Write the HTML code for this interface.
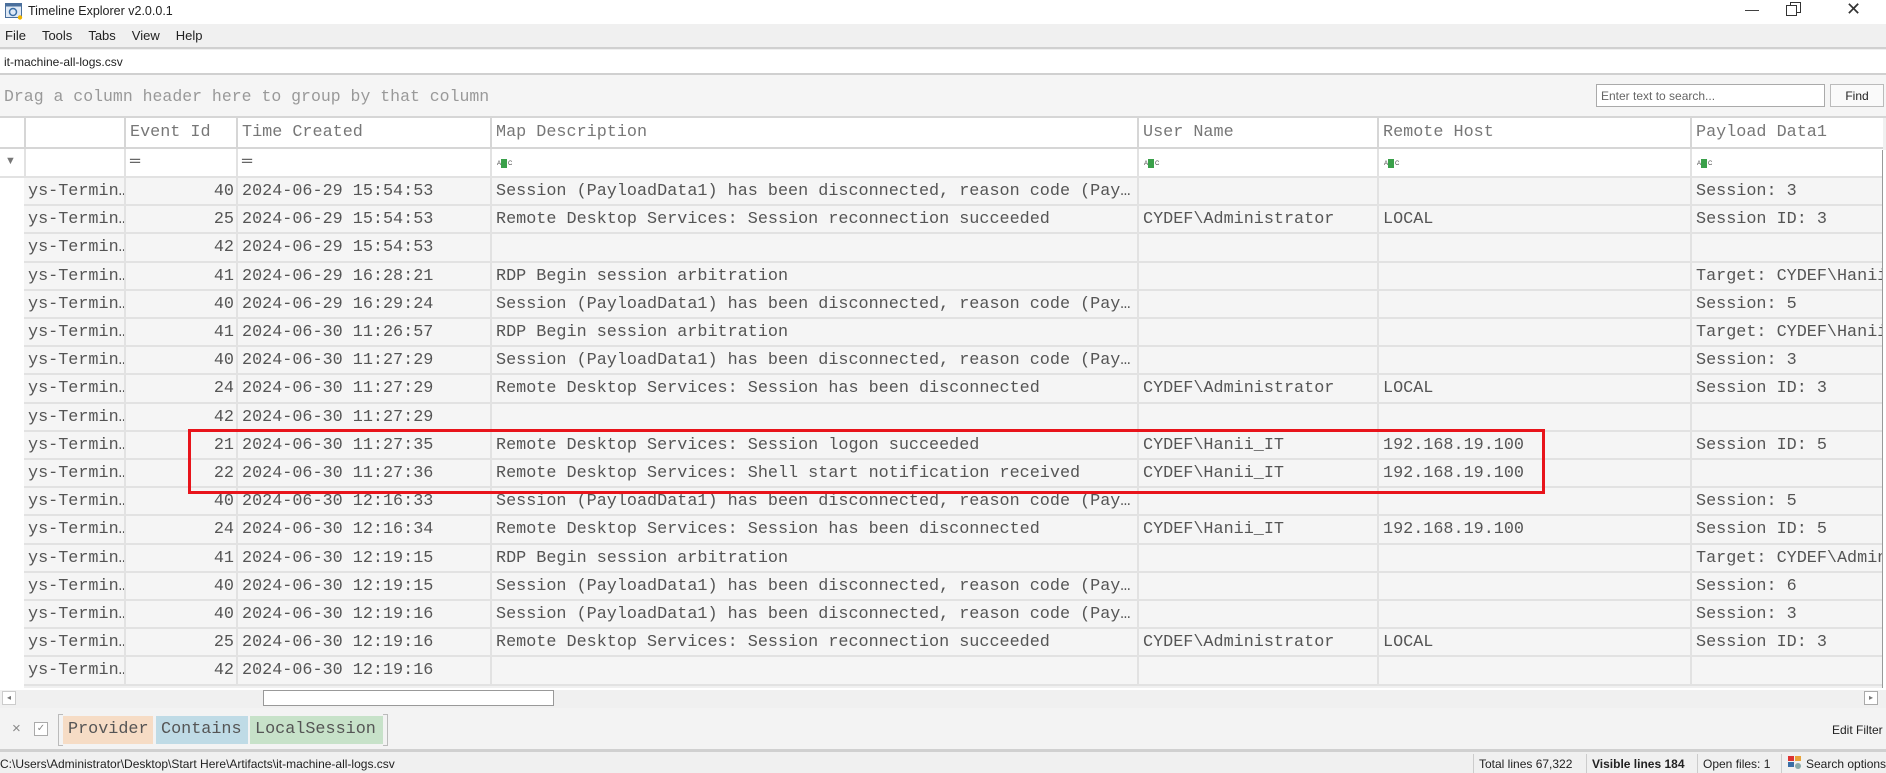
<!DOCTYPE html>
<html><head><meta charset="utf-8"><style>
*{box-sizing:border-box;margin:0;padding:0}
body{width:1886px;height:773px;overflow:hidden;background:#f0f0f0;font-family:"Liberation Sans",sans-serif;position:relative;color:#222}
.abs{position:absolute}
.mono{font-family:"Liberation Mono",monospace}
.row{position:absolute;left:24px;width:1859px;height:28.2px;border-bottom:2px solid #e2e2e2;background:#f5f5f5}
.c{position:absolute;top:0;height:100%;border-left:2px solid #e2e2e2;font-family:"Liberation Mono",monospace;font-size:16.8px;color:#555;line-height:27px;padding-left:4px;white-space:nowrap;overflow:hidden}
.hd{position:absolute;top:0;height:100%;border-left:2px solid #d6d6d6;font-family:"Liberation Mono",monospace;font-size:16.8px;color:#777;line-height:30px;padding-left:4px;white-space:nowrap;overflow:hidden}
.abc{position:absolute;left:5px;top:10px;width:14px;height:9px}
.abc i{position:absolute;top:2px;font-style:normal;font-size:6px;line-height:6px;color:#444;font-family:"Liberation Sans",sans-serif}
.abc b{position:absolute;left:4px;top:0;width:6px;height:9px;background:#3aa04a}
</style></head><body>
<div class="abs" style="left:0;top:0;width:1886px;height:24px;background:#fff"></div>
<svg class="abs" style="left:5px;top:3px" width="18" height="17" viewBox="0 0 18 17"><rect x="0.5" y="0.5" width="16" height="14" fill="#dfe9f5" stroke="#4a6f9c"/><rect x="0.5" y="0.5" width="16" height="3" fill="#4a6f9c"/><circle cx="8" cy="9" r="3.5" fill="none" stroke="#3a6ea5" stroke-width="1.5"/><circle cx="15" cy="14.5" r="2.2" fill="#f0b400"/></svg>
<div class="abs" style="left:28px;top:4px;font-size:12.5px;color:#222">Timeline Explorer v2.0.0.1</div>
<div class="abs" style="left:1745px;top:1px;font-size:14px;color:#333">—</div>
<div class="abs" style="left:1790px;top:2px;width:11px;height:11px;border:1px solid #333;background:#fff"></div>
<div class="abs" style="left:1786px;top:5px;width:11px;height:11px;border:1px solid #333;background:#fff"></div>
<div class="abs" style="left:1846px;top:-1px;font-size:18px;color:#333">✕</div>
<div class="abs" style="left:0;top:24px;width:1886px;height:25px;background:#f0f0f0;border-bottom:2px solid #d0d0d0"></div>
<div class="abs" style="left:5px;top:28px;font-size:13px;color:#222"><span>File</span><span style="margin-left:16px">Tools</span><span style="margin-left:16px">Tabs</span><span style="margin-left:16px">View</span><span style="margin-left:16px">Help</span></div>
<div class="abs" style="left:0;top:50px;width:1886px;height:25px;background:#fff;border-bottom:2px solid #d0d0d0"></div>
<div class="abs" style="left:4px;top:55px;font-size:12px;color:#222">it-machine-all-logs.csv</div>
<div class="abs" style="left:0;top:75px;width:1886px;height:43px;background:#f5f5f5;border-bottom:2px solid #d6d6d6"></div>
<div class="abs mono" style="left:4px;top:87px;font-size:16.5px;color:#999">Drag a column header here to group by that column</div>
<div class="abs" style="left:1596px;top:84px;width:229px;height:23px;background:#fff;border:1px solid #aaa;font-size:12px;color:#666;padding:4px 4px">Enter text to search...</div>
<div class="abs" style="left:1830px;top:84px;width:54px;height:23px;background:#fafafa;border:1px solid #bbb;font-size:12px;color:#222;text-align:center;padding-top:4px">Find</div>
<div class="abs" style="left:0;top:118px;width:1883px;height:31px;background:#fff;border-bottom:2px solid #d6d6d6">
<div class="hd" style="left:24px;width:100px"></div>
<div class="hd" style="left:124px;width:112px">Event Id</div>
<div class="hd" style="left:236px;width:254px">Time Created</div>
<div class="hd" style="left:490px;width:647px">Map Description</div>
<div class="hd" style="left:1137px;width:241px">User Name</div>
<div class="hd" style="left:1377px;width:313px">Remote Host</div>
<div class="hd" style="left:1690px;width:193px">Payload Data1</div>
</div>
<div class="abs" style="left:0;top:149px;width:1883px;height:29px;background:#fff;border-bottom:2px solid #e2e2e2">
<div class="abs" style="left:5px;top:6px;font-size:11px;color:#777">▼</div>
<div class="c" style="left:24px;width:100px"></div>
<div class="c" style="left:124px;width:112px;color:#666">═</div>
<div class="c" style="left:236px;width:254px;color:#666">═</div>
<div class="c" style="left:490px;width:647px"><span class="abc"><i style="left:0">A</i><b></b><i style="left:11px">C</i></span></div>
<div class="c" style="left:1137px;width:241px"><span class="abc"><i style="left:0">A</i><b></b><i style="left:11px">C</i></span></div>
<div class="c" style="left:1377px;width:313px"><span class="abc"><i style="left:0">A</i><b></b><i style="left:11px">C</i></span></div>
<div class="c" style="left:1690px;width:193px"><span class="abc"><i style="left:0">A</i><b></b><i style="left:11px">C</i></span></div>
</div>
<div class="abs" style="left:0;top:178px;width:24px;height:510px;background:#fff"></div>
<div class="row" style="top:178px"><div class="c" style="left:0;width:100px;border-left:none">ys-Termin…</div><div class="c" style="left:100px;width:112px;text-align:right;padding-right:2px">40</div><div class="c" style="left:212px;width:254px">2024-06-29 15:54:53</div><div class="c" style="left:466px;width:647px">Session (PayloadData1) has been disconnected, reason code (Pay…</div><div class="c" style="left:1113px;width:241px"></div><div class="c" style="left:1353px;width:313px"></div><div class="c" style="left:1666px;width:193px">Session: 3</div></div>
<div class="row" style="top:206.2px"><div class="c" style="left:0;width:100px;border-left:none">ys-Termin…</div><div class="c" style="left:100px;width:112px;text-align:right;padding-right:2px">25</div><div class="c" style="left:212px;width:254px">2024-06-29 15:54:53</div><div class="c" style="left:466px;width:647px">Remote Desktop Services: Session reconnection succeeded</div><div class="c" style="left:1113px;width:241px">CYDEF\Administrator</div><div class="c" style="left:1353px;width:313px">LOCAL</div><div class="c" style="left:1666px;width:193px">Session ID: 3</div></div>
<div class="row" style="top:234.4px"><div class="c" style="left:0;width:100px;border-left:none">ys-Termin…</div><div class="c" style="left:100px;width:112px;text-align:right;padding-right:2px">42</div><div class="c" style="left:212px;width:254px">2024-06-29 15:54:53</div><div class="c" style="left:466px;width:647px"></div><div class="c" style="left:1113px;width:241px"></div><div class="c" style="left:1353px;width:313px"></div><div class="c" style="left:1666px;width:193px"></div></div>
<div class="row" style="top:262.6px"><div class="c" style="left:0;width:100px;border-left:none">ys-Termin…</div><div class="c" style="left:100px;width:112px;text-align:right;padding-right:2px">41</div><div class="c" style="left:212px;width:254px">2024-06-29 16:28:21</div><div class="c" style="left:466px;width:647px">RDP Begin session arbitration</div><div class="c" style="left:1113px;width:241px"></div><div class="c" style="left:1353px;width:313px"></div><div class="c" style="left:1666px;width:193px">Target: CYDEF\Hanii_IT</div></div>
<div class="row" style="top:290.8px"><div class="c" style="left:0;width:100px;border-left:none">ys-Termin…</div><div class="c" style="left:100px;width:112px;text-align:right;padding-right:2px">40</div><div class="c" style="left:212px;width:254px">2024-06-29 16:29:24</div><div class="c" style="left:466px;width:647px">Session (PayloadData1) has been disconnected, reason code (Pay…</div><div class="c" style="left:1113px;width:241px"></div><div class="c" style="left:1353px;width:313px"></div><div class="c" style="left:1666px;width:193px">Session: 5</div></div>
<div class="row" style="top:319px"><div class="c" style="left:0;width:100px;border-left:none">ys-Termin…</div><div class="c" style="left:100px;width:112px;text-align:right;padding-right:2px">41</div><div class="c" style="left:212px;width:254px">2024-06-30 11:26:57</div><div class="c" style="left:466px;width:647px">RDP Begin session arbitration</div><div class="c" style="left:1113px;width:241px"></div><div class="c" style="left:1353px;width:313px"></div><div class="c" style="left:1666px;width:193px">Target: CYDEF\Hanii_IT</div></div>
<div class="row" style="top:347.2px"><div class="c" style="left:0;width:100px;border-left:none">ys-Termin…</div><div class="c" style="left:100px;width:112px;text-align:right;padding-right:2px">40</div><div class="c" style="left:212px;width:254px">2024-06-30 11:27:29</div><div class="c" style="left:466px;width:647px">Session (PayloadData1) has been disconnected, reason code (Pay…</div><div class="c" style="left:1113px;width:241px"></div><div class="c" style="left:1353px;width:313px"></div><div class="c" style="left:1666px;width:193px">Session: 3</div></div>
<div class="row" style="top:375.4px"><div class="c" style="left:0;width:100px;border-left:none">ys-Termin…</div><div class="c" style="left:100px;width:112px;text-align:right;padding-right:2px">24</div><div class="c" style="left:212px;width:254px">2024-06-30 11:27:29</div><div class="c" style="left:466px;width:647px">Remote Desktop Services: Session has been disconnected</div><div class="c" style="left:1113px;width:241px">CYDEF\Administrator</div><div class="c" style="left:1353px;width:313px">LOCAL</div><div class="c" style="left:1666px;width:193px">Session ID: 3</div></div>
<div class="row" style="top:403.6px"><div class="c" style="left:0;width:100px;border-left:none">ys-Termin…</div><div class="c" style="left:100px;width:112px;text-align:right;padding-right:2px">42</div><div class="c" style="left:212px;width:254px">2024-06-30 11:27:29</div><div class="c" style="left:466px;width:647px"></div><div class="c" style="left:1113px;width:241px"></div><div class="c" style="left:1353px;width:313px"></div><div class="c" style="left:1666px;width:193px"></div></div>
<div class="row" style="top:431.8px"><div class="c" style="left:0;width:100px;border-left:none">ys-Termin…</div><div class="c" style="left:100px;width:112px;text-align:right;padding-right:2px">21</div><div class="c" style="left:212px;width:254px">2024-06-30 11:27:35</div><div class="c" style="left:466px;width:647px">Remote Desktop Services: Session logon succeeded</div><div class="c" style="left:1113px;width:241px">CYDEF\Hanii_IT</div><div class="c" style="left:1353px;width:313px">192.168.19.100</div><div class="c" style="left:1666px;width:193px">Session ID: 5</div></div>
<div class="row" style="top:460px"><div class="c" style="left:0;width:100px;border-left:none">ys-Termin…</div><div class="c" style="left:100px;width:112px;text-align:right;padding-right:2px">22</div><div class="c" style="left:212px;width:254px">2024-06-30 11:27:36</div><div class="c" style="left:466px;width:647px">Remote Desktop Services: Shell start notification received</div><div class="c" style="left:1113px;width:241px">CYDEF\Hanii_IT</div><div class="c" style="left:1353px;width:313px">192.168.19.100</div><div class="c" style="left:1666px;width:193px"></div></div>
<div class="row" style="top:488.2px"><div class="c" style="left:0;width:100px;border-left:none">ys-Termin…</div><div class="c" style="left:100px;width:112px;text-align:right;padding-right:2px">40</div><div class="c" style="left:212px;width:254px">2024-06-30 12:16:33</div><div class="c" style="left:466px;width:647px">Session (PayloadData1) has been disconnected, reason code (Pay…</div><div class="c" style="left:1113px;width:241px"></div><div class="c" style="left:1353px;width:313px"></div><div class="c" style="left:1666px;width:193px">Session: 5</div></div>
<div class="row" style="top:516.4px"><div class="c" style="left:0;width:100px;border-left:none">ys-Termin…</div><div class="c" style="left:100px;width:112px;text-align:right;padding-right:2px">24</div><div class="c" style="left:212px;width:254px">2024-06-30 12:16:34</div><div class="c" style="left:466px;width:647px">Remote Desktop Services: Session has been disconnected</div><div class="c" style="left:1113px;width:241px">CYDEF\Hanii_IT</div><div class="c" style="left:1353px;width:313px">192.168.19.100</div><div class="c" style="left:1666px;width:193px">Session ID: 5</div></div>
<div class="row" style="top:544.6px"><div class="c" style="left:0;width:100px;border-left:none">ys-Termin…</div><div class="c" style="left:100px;width:112px;text-align:right;padding-right:2px">41</div><div class="c" style="left:212px;width:254px">2024-06-30 12:19:15</div><div class="c" style="left:466px;width:647px">RDP Begin session arbitration</div><div class="c" style="left:1113px;width:241px"></div><div class="c" style="left:1353px;width:313px"></div><div class="c" style="left:1666px;width:193px">Target: CYDEF\Administrator</div></div>
<div class="row" style="top:572.8px"><div class="c" style="left:0;width:100px;border-left:none">ys-Termin…</div><div class="c" style="left:100px;width:112px;text-align:right;padding-right:2px">40</div><div class="c" style="left:212px;width:254px">2024-06-30 12:19:15</div><div class="c" style="left:466px;width:647px">Session (PayloadData1) has been disconnected, reason code (Pay…</div><div class="c" style="left:1113px;width:241px"></div><div class="c" style="left:1353px;width:313px"></div><div class="c" style="left:1666px;width:193px">Session: 6</div></div>
<div class="row" style="top:601px"><div class="c" style="left:0;width:100px;border-left:none">ys-Termin…</div><div class="c" style="left:100px;width:112px;text-align:right;padding-right:2px">40</div><div class="c" style="left:212px;width:254px">2024-06-30 12:19:16</div><div class="c" style="left:466px;width:647px">Session (PayloadData1) has been disconnected, reason code (Pay…</div><div class="c" style="left:1113px;width:241px"></div><div class="c" style="left:1353px;width:313px"></div><div class="c" style="left:1666px;width:193px">Session: 3</div></div>
<div class="row" style="top:629.2px"><div class="c" style="left:0;width:100px;border-left:none">ys-Termin…</div><div class="c" style="left:100px;width:112px;text-align:right;padding-right:2px">25</div><div class="c" style="left:212px;width:254px">2024-06-30 12:19:16</div><div class="c" style="left:466px;width:647px">Remote Desktop Services: Session reconnection succeeded</div><div class="c" style="left:1113px;width:241px">CYDEF\Administrator</div><div class="c" style="left:1353px;width:313px">LOCAL</div><div class="c" style="left:1666px;width:193px">Session ID: 3</div></div>
<div class="row" style="top:657.4px"><div class="c" style="left:0;width:100px;border-left:none">ys-Termin…</div><div class="c" style="left:100px;width:112px;text-align:right;padding-right:2px">42</div><div class="c" style="left:212px;width:254px">2024-06-30 12:19:16</div><div class="c" style="left:466px;width:647px"></div><div class="c" style="left:1113px;width:241px"></div><div class="c" style="left:1353px;width:313px"></div><div class="c" style="left:1666px;width:193px"></div></div>
<div class="abs" style="left:1882px;top:150px;width:4px;height:540px;background:#fff;border-left:1px solid #999"></div>
<div class="abs" style="left:188px;top:429px;width:1357px;height:65px;border:3px solid #e8141b"></div>
<div class="abs" style="left:0;top:688px;width:1886px;height:20px;background:#f0f0f0;border-top:2px solid #fff"></div>
<div class="abs" style="left:2px;top:691px;width:14px;height:14px;border:1px solid #ccc;background:#fff;font-size:8px;color:#777;text-align:center;line-height:12px">◂</div>
<div class="abs" style="left:263px;top:690px;width:291px;height:16px;border:1px solid #999;background:#fff"></div>
<div class="abs" style="left:1864px;top:691px;width:14px;height:14px;border:1px solid #aaa;background:#fff;font-size:8px;color:#777;text-align:center;line-height:12px">▸</div>
<div class="abs" style="left:0;top:708px;width:1886px;height:44px;background:#f3f3f3;border-bottom:3px solid #d0d0d0"></div>
<div class="abs" style="left:12px;top:720px;font-size:15px;color:#888">×</div>
<div class="abs" style="left:34px;top:722px;width:14px;height:14px;border:1px solid #aaa;background:#fff;font-size:10px;color:#888;text-align:center;line-height:12px">✓</div>
<div class="abs" style="left:58px;top:714px;width:5px;height:32px;border:1px solid #bbb;border-right:none"></div>
<div class="abs mono" style="left:63px;top:716px;width:90px;height:28px;background:#f6dcc5;font-size:16.8px;color:#555;line-height:28px;padding-left:5px">Provider</div>
<div class="abs mono" style="left:156px;top:716px;width:92px;height:28px;background:#bfdbe6;font-size:16.8px;color:#555;line-height:28px;padding-left:5px">Contains</div>
<div class="abs mono" style="left:250px;top:716px;width:133px;height:28px;background:#c7e2c9;font-size:16.8px;color:#555;line-height:28px;padding-left:5px">LocalSession</div>
<div class="abs" style="left:383px;top:714px;width:5px;height:32px;border:1px solid #bbb;border-left:none"></div>
<div class="abs" style="left:1832px;top:723px;font-size:12px;color:#222">Edit Filter</div>
<div class="abs" style="left:0;top:754px;width:1886px;height:19px;background:#f0f0f0"></div>
<div class="abs" style="left:0;top:757px;font-size:12px;color:#222;white-space:nowrap">C:\Users\Administrator\Desktop\Start Here\Artifacts\it-machine-all-logs.csv</div>
<div class="abs" style="left:1473px;top:754px;height:19px;border-left:1px solid #ccc"></div>
<div class="abs" style="left:1479px;top:757px;font-size:12px;color:#222;white-space:nowrap">Total lines 67,322</div>
<div class="abs" style="left:1586px;top:754px;height:19px;border-left:1px solid #ccc"></div>
<div class="abs" style="left:1592px;top:757px;font-size:12px;font-weight:bold;color:#222;white-space:nowrap">Visible lines 184</div>
<div class="abs" style="left:1697px;top:754px;height:19px;border-left:1px solid #ccc"></div>
<div class="abs" style="left:1703px;top:757px;font-size:12px;color:#222;white-space:nowrap">Open files: 1</div>
<div class="abs" style="left:1781px;top:754px;height:19px;border-left:1px solid #ccc"></div>
<svg class="abs" style="left:1788px;top:756px" width="15" height="14"><rect x="0" y="0" width="6" height="5" fill="#d33"/><rect x="7" y="0" width="6" height="5" fill="#e8a33a"/><rect x="0" y="6" width="6" height="5" fill="#3a6ea5"/><circle cx="10" cy="10" r="3" fill="#8aa"/></svg>
<div class="abs" style="left:1806px;top:757px;font-size:12px;color:#222;white-space:nowrap">Search options</div>
</body></html>
